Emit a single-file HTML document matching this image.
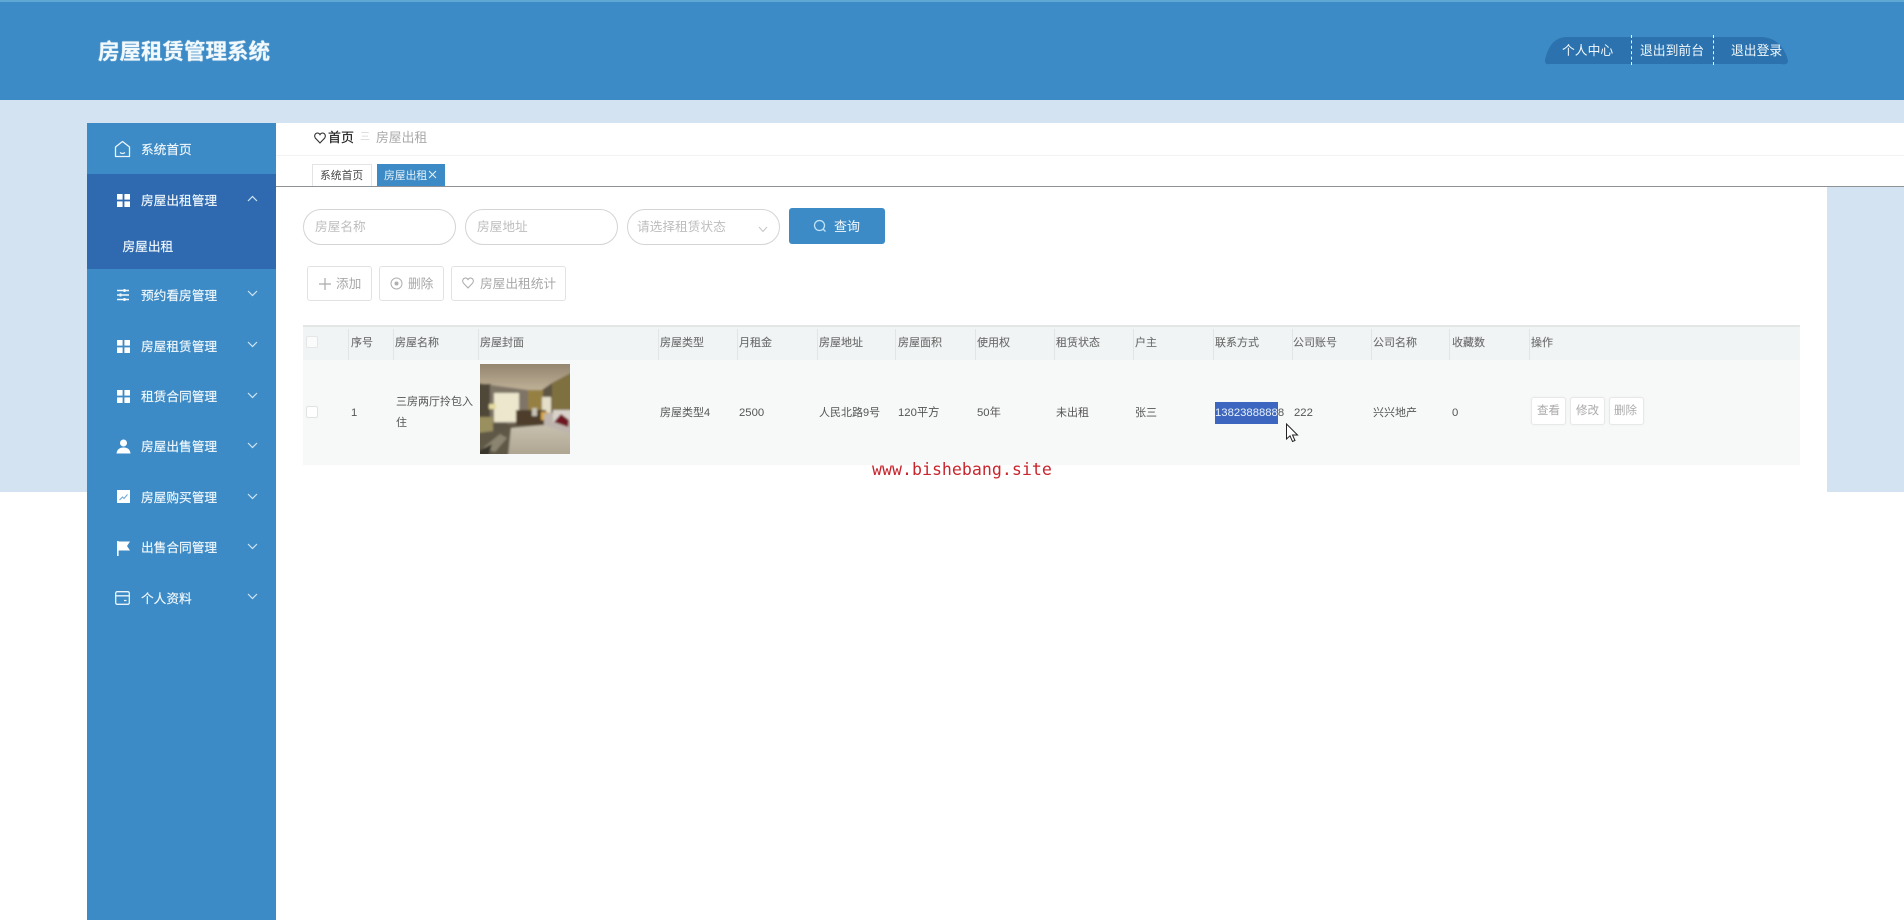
<!DOCTYPE html>
<html lang="zh">
<head>
<meta charset="utf-8">
<title>房屋租赁管理系统</title>
<style>
html,body{margin:0;padding:0;width:1904px;height:920px;overflow:hidden;background:#fff}
#r{position:relative;width:1904px;height:920px;overflow:hidden;background:#fff;font-family:"Liberation Sans","Noto Sans CJK SC",sans-serif;filter:blur(.35px)}
#r div,#r span,#r svg{position:absolute;display:block}
.t{white-space:nowrap;line-height:20px;height:20px}
.m{font-size:12.7px;color:#f0f8fc;-webkit-text-stroke:.15px #f0f8fc}
.h{font-size:11px;color:#6a6a6a;top:333px;-webkit-text-stroke:.1px #6a6a6a}
.c{font-size:11px;color:#555;top:403px}
.n{font-size:11.3px}
.d{width:1px;background:#e1e5e6;top:329px;height:31px}
.i{border:1px solid #d4d4d4;border-radius:18px;box-sizing:border-box;background:#fff;height:36px;top:209px}
.p{font-size:12.7px;color:#bdbdbd;top:217px}
.b{border:1px solid #e2e2e2;border-radius:3px;box-sizing:border-box;background:#fff;height:35px;top:266px}
.g{font-size:12.7px;color:#a8a8a8;top:274px}
.a{border:1px solid #e8e8e8;border-radius:3px;box-sizing:border-box;background:#fff;height:28px;width:35px;top:397px;box-shadow:0 0 2px #eee}
.s{font-size:11.5px;color:#aaa;top:401px}
</style>
</head>
<body>
<div id="r">
<!-- backgrounds -->
<div style="left:0;top:100px;width:1904px;height:392px;background:#d3e3f1"></div>
<div style="left:0;top:0;width:1904px;height:100px;background:#3d8bc6"></div>
<div style="left:0;top:0;width:1904px;height:2px;background:#5fa8d3"></div>
<div style="left:276px;top:123px;width:1628px;height:64px;background:#fff"></div>
<div style="left:276px;top:187px;width:1551px;height:305px;background:#fff"></div>

<!-- header -->
<span class="t" style="left:98px;top:41px;font-size:21.5px;font-weight:700;color:#f2f9fc;line-height:22px;height:22px;text-shadow:0 0 1px #f2f9fc">房屋租赁管理系统</span>
<svg style="left:1545px;top:35px" width="243" height="32" viewBox="0 0 243 32"><path d="M0 25C3 12 9 2 22 2H216C230 2 240 12 243 26C243 29 240 30 236 29H4C1 30 0 28 0 25Z" fill="#2b72ae"/></svg>
<span class="t" style="left:1562px;top:41px;font-size:12.8px;color:#f0f8fc">个人中心</span>
<span class="t" style="left:1640px;top:41px;font-size:12.8px;color:#f0f8fc">退出到前台</span>
<span class="t" style="left:1731px;top:41px;font-size:12.8px;color:#f0f8fc">退出登录</span>
<div style="left:1631px;top:35px;height:30px;border-left:1px dashed #e8f4fa"></div>
<div style="left:1713px;top:35px;height:30px;border-left:1px dashed #e8f4fa"></div>

<!-- sidebar -->
<div style="left:87px;top:123px;width:189px;height:797px;background:#3c8ac6"></div>
<div style="left:87px;top:174px;width:189px;height:95px;background:#2f69b0"></div>

<svg style="left:114px;top:140px" width="17" height="18" viewBox="0 0 17 18" fill="none" stroke="#eaf5fb" stroke-width="1.3"><path d="M8.5 1.5L15.5 7V16.5H1.5V7Z" stroke-linejoin="round"/><path d="M6 12.5Q8.5 14.5 11 12.5"/></svg>
<span class="t m" style="left:141px;top:140px">系统首页</span>

<svg style="left:117px;top:194px" width="13" height="13" viewBox="0 0 13 13" fill="#fff"><rect width="5.6" height="5.6"/><rect x="7.4" width="5.6" height="5.6"/><rect y="7.4" width="5.6" height="5.6"/><rect x="7.4" y="7.4" width="5.6" height="5.6"/></svg>
<span class="t m" style="left:141px;top:191px">房屋出租管理</span>
<svg style="left:247px;top:195px" width="11" height="7" viewBox="0 0 11 7" fill="none" stroke="#cfe6f5" stroke-width="1.2"><path d="M1 6L5.5 1.5L10 6"/></svg>
<span class="t m" style="left:122.500px;top:236.500px">房屋出租</span>

<svg style="left:116px;top:288px" width="14" height="14" viewBox="0 0 14 14" fill="none" stroke="#f2f9fc" stroke-width="1.4"><path d="M1 2.500H13M1 7H13M1 11.500H13"/><path d="M8.500 1V4M4.500 5.500V8.500M8.500 10V13" stroke-width="2"/></svg>
<span class="t m" style="left:141px;top:286px">预约看房管理</span>
<svg style="left:247px;top:290px" width="11" height="7" viewBox="0 0 11 7" fill="none" stroke="#cfe6f5" stroke-width="1.2"><path d="M1 1L5.5 5.500L10 1"/></svg>

<svg style="left:117px;top:340px" width="13" height="13" viewBox="0 0 13 13" fill="#fff"><rect width="5.6" height="5.6"/><rect x="7.4" width="5.6" height="5.6"/><rect y="7.4" width="5.6" height="5.6"/><rect x="7.4" y="7.4" width="5.6" height="5.6"/></svg>
<span class="t m" style="left:141px;top:337px">房屋租赁管理</span>
<svg style="left:247px;top:341px" width="11" height="7" viewBox="0 0 11 7" fill="none" stroke="#cfe6f5" stroke-width="1.2"><path d="M1 1L5.5 5.500L10 1"/></svg>

<svg style="left:117px;top:390px" width="13" height="13" viewBox="0 0 13 13" fill="#fff"><rect width="5.6" height="5.6"/><rect x="7.4" width="5.6" height="5.6"/><rect y="7.4" width="5.6" height="5.6"/><rect x="7.4" y="7.4" width="5.6" height="5.6"/></svg>
<span class="t m" style="left:141px;top:387px">租赁合同管理</span>
<svg style="left:247px;top:392px" width="11" height="7" viewBox="0 0 11 7" fill="none" stroke="#cfe6f5" stroke-width="1.2"><path d="M1 1L5.5 5.500L10 1"/></svg>

<svg style="left:116px;top:439px" width="15" height="15" viewBox="0 0 15 15" fill="#fff"><circle cx="7.500" cy="4" r="3.500"/><path d="M0.500 14.500C1 10 4 8.500 7.500 8.500C11 8.500 14 10 14.500 14.500Z"/></svg>
<span class="t m" style="left:141px;top:437px">房屋出售管理</span>
<svg style="left:247px;top:442px" width="11" height="7" viewBox="0 0 11 7" fill="none" stroke="#cfe6f5" stroke-width="1.2"><path d="M1 1L5.5 5.500L10 1"/></svg>

<svg style="left:117px;top:490px" width="13" height="13" viewBox="0 0 13 13"><rect width="13" height="13" fill="#fff"/><path d="M2.500 10L5.500 7L7 8.500L10.500 4.500" fill="none" stroke="#6da7d6" stroke-width="1"/></svg>
<span class="t m" style="left:141px;top:488px">房屋购买管理</span>
<svg style="left:247px;top:493px" width="11" height="7" viewBox="0 0 11 7" fill="none" stroke="#cfe6f5" stroke-width="1.2"><path d="M1 1L5.5 5.500L10 1"/></svg>

<svg style="left:117px;top:541px" width="13" height="15" viewBox="0 0 13 15" fill="#fff"><path d="M0 0H1.600V15H0ZM1.600 0.500H13L10 5L13 9.500H1.600Z"/></svg>
<span class="t m" style="left:141px;top:538px">出售合同管理</span>
<svg style="left:247px;top:543px" width="11" height="7" viewBox="0 0 11 7" fill="none" stroke="#cfe6f5" stroke-width="1.2"><path d="M1 1L5.5 5.500L10 1"/></svg>

<svg style="left:115px;top:591px" width="15" height="14" viewBox="0 0 15 14" fill="none" stroke="#eaf5fb" stroke-width="1.300"><rect x="0.700" y="0.700" width="13.600" height="12.600" rx="1.500"/><path d="M1 4.800H14M9 9.500H11.500"/></svg>
<span class="t m" style="left:141px;top:589px">个人资料</span>
<svg style="left:247px;top:593px" width="11" height="7" viewBox="0 0 11 7" fill="none" stroke="#cfe6f5" stroke-width="1.2"><path d="M1 1L5.5 5.500L10 1"/></svg>

<!-- breadcrumb -->
<div style="left:276px;top:155px;width:1628px;height:1px;background:#f3f3f3"></div>
<svg style="left:314px;top:132px" width="12" height="12" viewBox="0 0 12 12" fill="none" stroke="#333" stroke-width="1.100"><path d="M6 11L1.300 6C-0.200 3.500 1.300 1 3.500 1C4.700 1 5.500 1.700 6 2.600C6.500 1.700 7.300 1 8.500 1C10.700 1 12.200 3.500 10.700 6Z"/></svg>
<span class="t" style="left:328px;top:128px;font-size:13px;color:#222;-webkit-text-stroke:.2px #222">首页</span>
<span class="t" style="left:360px;top:128px;font-size:10px;color:#d4d4d4">三</span>
<span class="t" style="left:376px;top:128px;font-size:12.800px;color:#a8a8a8">房屋出租</span>

<!-- tabs -->
<div style="left:312px;top:164px;width:60px;height:23px;box-sizing:border-box;border:1px solid #e4e4e4;border-bottom:0;background:#fff"></div>
<span class="t" style="left:320px;top:166px;font-size:10.800px;color:#444">系统首页</span>
<div style="left:377px;top:164px;width:68px;height:23px;background:#3d8bc6"></div>
<span class="t" style="left:384px;top:166px;font-size:10.800px;color:#e6f3fa">房屋出租</span>
<svg style="left:428px;top:170px" width="9" height="9" viewBox="0 0 9 9" fill="none" stroke="#e6f3fa" stroke-width="1"><path d="M1 1L8 8M8 1L1 8"/></svg>
<div style="left:276px;top:186px;width:1628px;height:1px;background:#909396"></div>

<!-- search -->
<div class="i" style="left:303px;width:153px"></div>
<span class="t p" style="left:315px">房屋名称</span>
<div class="i" style="left:465px;width:153px"></div>
<span class="t p" style="left:477px">房屋地址</span>
<div class="i" style="left:627px;width:153px"></div>
<span class="t p" style="left:637px">请选择租赁状态</span>
<svg style="left:758px;top:226px" width="10" height="7" viewBox="0 0 10 7" fill="none" stroke="#c4c4c4" stroke-width="1"><path d="M1 1L5 5.500L9 1"/></svg>
<div style="left:789px;top:208px;width:96px;height:36px;background:#3d8bc6;border-radius:3px"></div>
<svg style="left:813px;top:219px" width="14" height="14" viewBox="0 0 14 14" fill="none" stroke="#bfe3f5" stroke-width="1.300"><circle cx="6.500" cy="6.500" r="5"/><path d="M10 10L12.500 12.500"/></svg>
<span class="t" style="left:834px;top:217px;font-size:13px;color:#f0f8fc">查询</span>

<!-- buttons -->
<div class="b" style="left:307px;width:65px"></div>
<svg style="left:318px;top:277px" width="14" height="14" viewBox="0 0 14 14" fill="none" stroke="#aaa" stroke-width="1.200"><path d="M7 1V13M1 7H13"/></svg>
<span class="t g" style="left:336px">添加</span>
<div class="b" style="left:379px;width:65px"></div>
<svg style="left:390px;top:277px" width="13" height="13" viewBox="0 0 13 13" fill="none" stroke="#b0b0b0" stroke-width="1"><circle cx="6.500" cy="6.500" r="5.500"/><circle cx="6.500" cy="6.500" r="1.500" fill="#b0b0b0"/></svg>
<span class="t g" style="left:408px">删除</span>
<div class="b" style="left:451px;width:115px"></div>
<svg style="left:462px;top:277px" width="12" height="12" viewBox="0 0 12 12" fill="none" stroke="#aaa" stroke-width="1"><path d="M6 11L1.300 6C-0.200 3.500 1.300 1 3.500 1C4.700 1 5.500 1.700 6 2.600C6.500 1.700 7.300 1 8.500 1C10.700 1 12.200 3.500 10.700 6Z"/></svg>
<span class="t g" style="left:480px">房屋出租统计</span>

<!-- table -->
<div style="left:303px;top:325px;width:1497px;height:2px;background:#e4e6e6"></div>
<div style="left:303px;top:327px;width:1497px;height:33px;background:#f0f4f5"></div>
<div style="left:303px;top:360px;width:1497px;height:105px;background:#f7f8f8"></div>

<div class="d" style="left:348px"></div><div class="d" style="left:393px"></div><div class="d" style="left:478px"></div><div class="d" style="left:658px"></div><div class="d" style="left:737px"></div><div class="d" style="left:817px"></div><div class="d" style="left:895px"></div><div class="d" style="left:975px"></div><div class="d" style="left:1054px"></div><div class="d" style="left:1133px"></div><div class="d" style="left:1213px"></div><div class="d" style="left:1292px"></div><div class="d" style="left:1371px"></div><div class="d" style="left:1449px"></div><div class="d" style="left:1529px"></div>

<div style="left:306px;top:336px;width:12px;height:12px;box-sizing:border-box;border:1px solid #e4e6e8;background:#fafbfb;border-radius:2px"></div>
<span class="t h" style="left:351px">序号</span>
<span class="t h" style="left:395px">房屋名称</span>
<span class="t h" style="left:480px">房屋封面</span>
<span class="t h" style="left:660px">房屋类型</span>
<span class="t h" style="left:739px">月租金</span>
<span class="t h" style="left:819px">房屋地址</span>
<span class="t h" style="left:898px">房屋面积</span>
<span class="t h" style="left:977px">使用权</span>
<span class="t h" style="left:1056px">租赁状态</span>
<span class="t h" style="left:1135px">户主</span>
<span class="t h" style="left:1215px">联系方式</span>
<span class="t h" style="left:1293px">公司账号</span>
<span class="t h" style="left:1373px">公司名称</span>
<span class="t h" style="left:1452px">收藏数</span>
<span class="t h" style="left:1531px">操作</span>

<div style="left:306px;top:406px;width:12px;height:12px;box-sizing:border-box;border:1px solid #e0e2e4;background:#fff;border-radius:2px"></div>
<span class="t c n" style="left:351px">1</span>
<span class="t c" style="left:396px;top:392px">三房两厅拎包入</span>
<span class="t c" style="left:396px;top:413px">住</span>

<svg style="left:480px;top:364px" width="90" height="90" viewBox="0 0 90 90">
<defs><filter id="f" x="-5%" y="-5%" width="110%" height="110%"><feGaussianBlur stdDeviation="1"/></filter>
<linearGradient id="cl" x1="0" y1="0" x2="0" y2="1"><stop offset="0" stop-color="#8f806a"/><stop offset="1" stop-color="#c2b49b"/></linearGradient>
<linearGradient id="bd" x1="0" y1="0" x2="0" y2="1"><stop offset="0" stop-color="#c8c0ae"/><stop offset="1" stop-color="#aca38f"/></linearGradient></defs>
<clipPath id="cp"><rect width="90" height="90"/></clipPath>
<g clip-path="url(#cp)"><g filter="url(#f)">
<rect x="-3" y="-3" width="96" height="96" fill="#5f5443"/>
<path d="M-3 -3H93V8L72 19L59 28L30 24L-3 19Z" fill="url(#cl)"/>
<path d="M72 19L93 8V47H72Z" fill="#7f7040"/>
<rect x="-3" y="20" width="14" height="36" fill="#4f4738"/>
<path d="M10 21L48 26V60H10Z" fill="#7f7566"/>
<rect x="14" y="29" width="25" height="29" fill="#ede7cd"/>
<rect x="48" y="26" width="15" height="22" fill="#958043"/>
<rect x="9" y="40" width="7" height="5" fill="#e4dba0"/>
<rect x="62" y="33" width="9" height="16" fill="#e5dfc9"/>
<rect x="36" y="46" width="30" height="15" fill="#4d3d2a"/>
<rect x="61" y="48" width="7" height="8" fill="#d8a848"/>
<rect x="52" y="44" width="5" height="8" fill="#c8c3b4"/>
<rect x="-3" y="53" width="16" height="16" fill="#9a8f5e"/>
<rect x="13" y="59" width="14" height="9" fill="#5b5445"/>
<path d="M64 50L93 46V73L64 66Z" fill="#bdb5ad"/>
<path d="M73 46H93V58H73Z" fill="#d9d3cc"/>
<path d="M74 58L81 50L89 56L88 63Z" fill="#6e1522"/>
<path d="M-3 69L31 65L28 93H-3Z" fill="#5f5846"/>
<path d="M3 84L20 70L27 74L15 88Z" fill="#8a8470"/>
<path d="M-3 88L12 80L8 93H-3Z" fill="#38342a"/>
<path d="M31 64L63 61L93 71V93H28Z" fill="url(#bd)"/>
</g></g>
</svg>

<span class="t c" style="left:660px">房屋类型4</span>
<span class="t c n" style="left:739px">2500</span>
<span class="t c" style="left:819px">人民北路9号</span>
<span class="t c n" style="left:898px">120平方</span>
<span class="t c n" style="left:977px">50年</span>
<span class="t c" style="left:1056px">未出租</span>
<span class="t c" style="left:1135px">张三</span>
<div style="left:1215px;top:402px;width:63px;height:22px;background:#3c66bf"></div>
<span class="t c n" style="left:1215px;top:403px"><b style="font-weight:400;color:#e8f2fb">1382388888</b>8</span>
<span class="t c n" style="left:1294px">222</span>
<span class="t c" style="left:1373px">兴兴地产</span>
<span class="t c n" style="left:1452px">0</span>

<div class="a" style="left:1531px"></div><span class="t s" style="left:1537px">查看</span>
<div class="a" style="left:1570px"></div><span class="t s" style="left:1576px">修改</span>
<div class="a" style="left:1609px"></div><span class="t s" style="left:1614px">删除</span>

<!-- cursor -->
<svg style="left:1285px;top:423px" width="14" height="21" viewBox="0 0 14 21"><path d="M1.500 1V16L5 12.800L7.500 18.500L10 17.500L7.500 12H12.500Z" fill="#fff" stroke="#222" stroke-width="1"/></svg>

<!-- watermark -->
<span class="t" style="left:872px;top:460px;font-family:'DejaVu Sans Mono',monospace;font-size:16.6px;color:#c9252d">www.bishebang.site</span>
</div>
</body>
</html>
